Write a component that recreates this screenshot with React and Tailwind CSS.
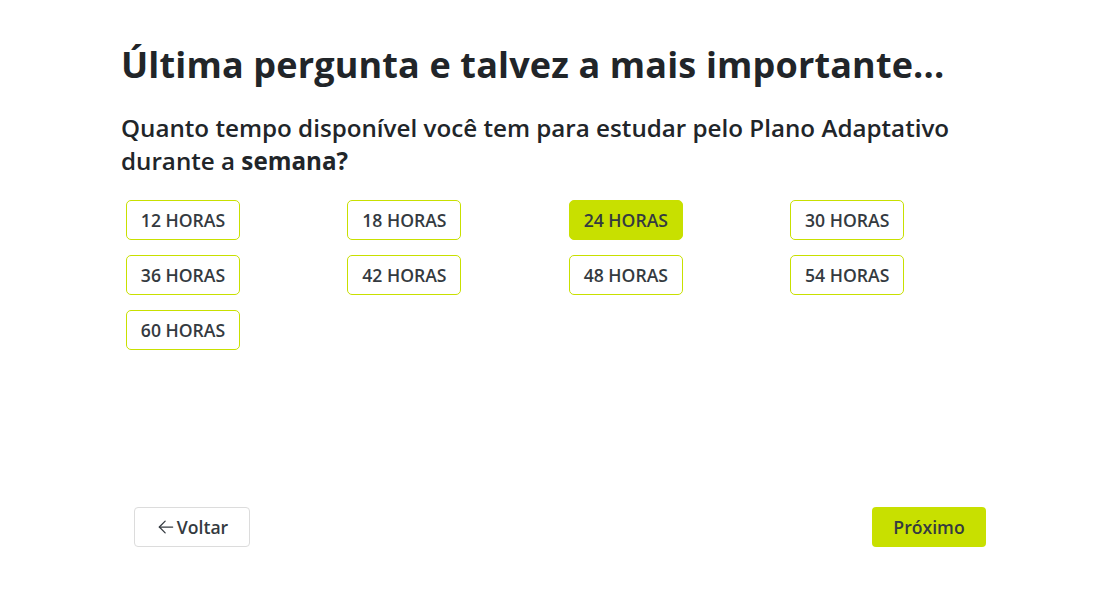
import React from "react";

const options = ["12", "18", "24", "30", "36", "42", "48", "54", "60"];

export default function App() {
  return (
    <div className="w-[1112px] h-[599px] bg-white text-[#212529]" style={{ fontFamily: '"Open Sans", sans-serif' }}>
      <div className="ml-[121px] w-[870px] flex flex-col">
        <h1 className="mt-[40px] text-[36px] leading-[50px] font-bold tracking-[0.15px]">Última pergunta e talvez a mais importante...</h1>
        <p className="mt-[21px] text-[24.2px] leading-[33px] font-semibold">
          Quanto tempo disponível você tem para estudar pelo Plano Adaptativo durante a <span className="font-bold">semana?</span>
        </p>
        <div className="mt-[23px] ml-[5px] grid grid-cols-[repeat(4,221.4px)] gap-y-[15px]">
          {options.map((o) => (
            <div key={o}>
              <button
                className={
                  "h-[40px] w-[114px] rounded-[5px] border border-[#c8e000] text-[17.6px] font-semibold text-[#343a40] " +
                  (o === "24" ? "bg-[#c8e000]" : "bg-white")
                }
              >
                {o} HORAS
              </button>
            </div>
          ))}
        </div>
      </div>
      <div className="ml-[134px] mr-[126px] mt-[157px] flex justify-between">
        <button className="h-[40px] w-[116px] rounded-[4px] border border-[#dcdcdc] bg-white flex items-center justify-center gap-[1px] text-[17.6px] font-semibold text-[#343a40]">
          <svg width="20" height="20" viewBox="0 0 24 24" fill="none" stroke="currentColor" strokeWidth="1.5" strokeLinecap="round" strokeLinejoin="round">
            <path d="M20 12H4" />
            <path d="M11 5l-7 7 7 7" />
          </svg>
          Voltar
        </button>
        <button className="h-[40px] w-[114px] rounded-[4px] bg-[#c8e000] text-[17.6px] font-semibold text-[#343a40]">Próximo</button>
      </div>
    </div>
  );
}
